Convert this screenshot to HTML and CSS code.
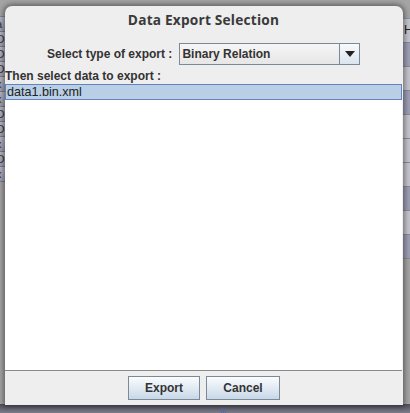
FILE: index.html
```html
<!DOCTYPE html>
<html>
<head>
<meta charset="utf-8">
<link rel="stylesheet" href="styles.css">
</head>
<body>
<div class="desktop">
  <div class="bg-left">
    <div class="cell">a</div><div class="cell">O</div><div class="cell">O</div><div class="cell">O</div><div class="cell">x</div><div class="cell">x</div><div class="cell">O</div><div class="cell">O</div><div class="cell">x</div><div class="cell">O</div><div class="cell">x</div>
  </div>
  <div class="bg-right">
    <div class="rcell">H</div><div class="rcell sel"></div><div class="rcell"></div><div class="rcell sel"></div><div class="rcell"></div><div class="rcell"></div><div class="rcell"></div><div class="rcell sel"></div><div class="rcell"></div><div class="rcell sel"></div>
  </div>
  <div class="bg-bottom"><span class="grip"></span></div>

  <div class="dialog">
    <div class="title">Data Export Selection</div>
    <div class="type-row">
      <span class="label">Select type of export :</span>
      <div class="combo">
        <span class="combo-text">Binary Relation</span>
        <span class="combo-btn"><svg width="10" height="6" viewBox="0 0 10 6"><path d="M0 0H10L5 6Z" fill="#222"/></svg></span>
      </div>
    </div>
    <div class="label then">Then select data to export :</div>
    <div class="list">
      <div class="item selected">data1.bin.xml</div>
    </div>
    <div class="buttons">
      <button class="btn btn-export">Export</button>
      <button class="btn btn-cancel">Cancel</button>
    </div>
  </div>
</div>
</body>
</html>
```
FILE: styles.css
```css
html, body {
  margin: 0;
  padding: 0;
}
body {
  width: 410px;
  height: 413px;
  overflow: hidden;
  font-family: "Liberation Sans", Arial, sans-serif;
}
.desktop {
  position: relative;
  width: 410px;
  height: 413px;
  background: #a4a4a4;
  overflow: hidden;
}
.bg-left {
  position: absolute;
  left: 0;
  top: 16px;
  width: 5px;
  overflow: hidden;
  display: flex;
  flex-direction: column;
  background: #a8a8b4;
  border-top: 1px solid #7a86a8;
}
.cell {
  height: 14px;
  border-bottom: 1px solid #7c7c8c;
  font-size: 11px;
  line-height: 14px;
  color: #333;
  text-indent: -4px;
  background: linear-gradient(#b8b8c4, #a0a0b0);
}
.bg-right {
  position: absolute;
  right: 0;
  top: 18px;
  width: 7px;
  overflow: hidden;
  display: flex;
  flex-direction: column;
  border-top: 1px solid #8a93b0;
}
.rcell {
  height: 23px;
  border-bottom: 1px solid #8a8a9a;
  background: #c4c4cc;
  font-size: 12px;
  line-height: 23px;
  color: #222;
  padding-left: 1px;
}
.rcell.sel {
  background: #9d9db4;
}
.bg-bottom {
  position: absolute;
  left: 0;
  right: 0;
  bottom: 0;
  height: 9px;
  background: linear-gradient(#50505c, #7c7c8a);
}
.grip {
  position: absolute;
  left: 221px;
  top: 4px;
  width: 1px;
  height: 5px;
  background: #5a6aa8;
  box-shadow: 2px 0 0 #5a6aa8, 4px 0 0 #5a6aa8;
}
.dialog {
  position: absolute;
  left: 5px;
  top: 6px;
  width: 398px;
  height: 399px;
  background: #eeeeee;
  border-radius: 7px 7px 0 0;
  box-shadow: 0 0 5px 2px rgba(0, 0, 0, 0.4);
  display: flex;
  flex-direction: column;
}
.title {
  font-family: "Open Sans", "DejaVu Sans", sans-serif;
  font-weight: bold;
  font-size: 13.7px;
  color: #3a3a3a;
  text-align: center;
  height: 29px;
  line-height: 28px;
  letter-spacing: 0.2px;
  padding-right: 1px;
}
.type-row {
  display: flex;
  align-items: center;
  justify-content: flex-start;
  padding-left: 42px;
  margin-top: 8px;
  height: 22px;
  gap: 6px;
}
.label {
  font-weight: bold;
  font-size: 12px;
  color: #333333;
}
.combo {
  display: flex;
  width: 181px;
  height: 22px;
  box-sizing: border-box;
  border: 1px solid #7a8a99;
  background: linear-gradient(#f6f6f6, #e6e6e6);
  margin-left: 1px;
}
.combo-text {
  flex: 1;
  font-weight: bold;
  font-size: 12px;
  color: #333;
  line-height: 20px;
  padding-left: 2px;
  border-right: 1px solid #7a8a99;
}
.combo-btn {
  width: 19px;
  display: flex;
  align-items: center;
  justify-content: center;
  background: linear-gradient(#f8fafc, #dbe4ee);
}
.then {
  margin-top: 5px;
  padding-left: 0;
  height: 13px;
  line-height: 13px;
}
.list {
  margin-top: 1px;
  flex: 1;
  background: #ffffff;
  margin-right: 1px;
  border-bottom: 1px solid #8a8a8a;
}
.item {
  font-size: 12.6px;
  color: #222;
  height: 16px;
  line-height: 14px;
  box-sizing: border-box;
  padding-left: 1px;
}
.item.selected {
  background: #b8cfe5;
  border: 1px solid #6382bf;
}
.buttons {
  height: 34px;
  display: flex;
  justify-content: center;
  align-items: center;
  gap: 6px;
  padding-left: 0;
}
.btn {
  height: 24px;
  box-sizing: border-box;
  border: 1px solid #7a8a99;
  background: linear-gradient(#fbfcfd, #c8d8e8);
  font-family: "Liberation Sans", Arial, sans-serif;
  font-weight: bold;
  font-size: 12px;
  color: #333;
  padding: 0;
  border-radius: 0;
}
.btn-export { width: 72px; }
.btn-cancel { width: 74px; }
```
